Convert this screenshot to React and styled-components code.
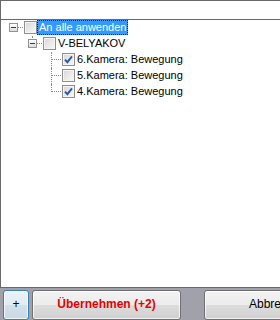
import React from 'react';
import styled, { createGlobalStyle } from 'styled-components';

const Global = createGlobalStyle`
  body {
    margin: 0;
    overflow: hidden;
    background: #ffffff;
    font-family: "Liberation Sans", Arial, sans-serif;
  }
`;

const Frame = styled.div`
  width: 280px;
  height: 320px;
  display: flex;
  flex-direction: column;
  background-color: #a1a1ac;
  overflow: hidden;
`;

const TopStrip = styled.div`
  height: 18px;
  background-color: white;
  border-top: 1px solid #6a6a6a;
  border-left: 1px solid #6a6a6a;
`;

const TreePanel = styled.div`
  box-sizing: border-box;
  height: 271px;
  padding: 0 0 0 3px;
  background-color: white;
  border-top: 1px solid #6a6a6a;
  border-left: 1px solid #6a6a6a;
  border-bottom: 1px solid #6a6a6a;
`;

const Row = styled.div`
  display: flex;
  align-items: center;
  height: 16px;
  box-sizing: border-box;
  padding-bottom: 1px;
`;

const Guide = styled.span`
  position: relative;
  flex: none;
  width: 19px;
  height: 16px;
  align-self: flex-start;

  &::before {
    content: '';
    display: ${(props) => (props.up || props.down ? 'block' : 'none')};
    position: absolute;
    left: 9px;
    top: ${(props) => (props.up ? '0' : '8px')};
    bottom: ${(props) => (props.down ? '0' : '8px')};
    border-left: 1px dotted #8c8c8c;
  }

  &::after {
    content: '';
    display: ${(props) => (props.branch ? 'block' : 'none')};
    position: absolute;
    top: 7px;
    left: ${(props) => (props.expander ? '14px' : '10px')};
    right: 0;
    border-top: 1px dotted #8c8c8c;
  }
`;

const Expander = styled.span`
  position: absolute;
  left: 5px;
  top: 3px;
  width: 7px;
  height: 7px;
  border: 1px solid #939393;
  background: linear-gradient(#ffffff, #dcdcdc);
  z-index: 1;

  &::after {
    content: '';
    position: absolute;
    left: 1px;
    top: 3px;
    width: 5px;
    height: 1px;
    background-color: #3a3a3a;
  }
`;

const Check = styled.span`
  flex: none;
  box-sizing: border-box;
  width: 13px;
  height: 13px;
  margin-left: 1px;
  border: 1px solid #8f8f8f;
  background: linear-gradient(135deg, #d6d6d6 0%, #ececec 60%, #f8f8f8 100%);
  box-shadow: inset 0 0 0 1px #f4f4f4;
  display: flex;
  align-items: center;
  justify-content: center;
`;

const Label = styled.span`
  flex: none;
  height: 13px;
  line-height: 13px;
  padding: 0 1px;
  font-size: 11px;
  white-space: nowrap;
  color: ${(props) => (props.selected ? 'white' : '#000000')};
  background-color: ${(props) => (props.selected ? '#3399ff' : 'transparent')};
  border: 1px dotted ${(props) => (props.selected ? '#202020' : 'transparent')};
`;

const ButtonBar = styled.div`
  flex: 1;
  display: flex;
  align-items: flex-start;
  padding: 2px 0 0 3px;
`;

const Button = styled.button`
  flex: none;
  box-sizing: border-box;
  height: 30px;
  width: ${(props) => props.width}px;
  margin-right: ${(props) => props.gap || 0}px;
  padding: 0 0 2px;
  border: 1px solid ${(props) => (props.focused ? '#3c7fb1' : '#707070')};
  border-radius: 3px;
  background: ${(props) =>
    props.focused
      ? 'linear-gradient(#eaf3f9 0%, #e0ebf3 50%, #d2e0ea 51%, #c9d9e5 100%)'
      : 'linear-gradient(#f3f3f3 0%, #ebebeb 50%, #dddddd 51%, #d0d0d0 100%)'};
  box-shadow: inset 0 0 0 1px rgba(255, 255, 255, 0.7);
  font-family: "Liberation Sans", Arial, sans-serif;
  font-size: 12px;
  font-weight: ${(props) => (props.primary ? 'bold' : 'normal')};
  color: ${(props) => (props.primary ? '#e30000' : '#000000')};
  white-space: nowrap;
  overflow: hidden;
`;

const CheckMark = () => (
  <svg width="9" height="9" viewBox="0 0 9 9">
    <path d="M1 4.6 L3.4 7.2 L8 1.4" fill="none" stroke="#2f56a6" strokeWidth="1.9" />
  </svg>
);

const nodes = [
  { label: 'An alle anwenden', selected: true, guides: [{ expander: true, branch: true }] },
  { label: 'V-BELYAKOV', guides: [{}, { expander: true, branch: true, up: true }] },
  { label: '6.Kamera: Bewegung', checked: true, guides: [{}, {}, { up: true, down: true, branch: true }] },
  { label: '5.Kamera: Bewegung', guides: [{}, {}, { up: true, down: true, branch: true }] },
  { label: '4.Kamera: Bewegung', checked: true, guides: [{}, {}, { up: true, branch: true }] },
];

const TreeRow = ({ node }) => (
  <Row>
    {node.guides.map((g, i) => (
      <Guide key={i} up={g.up} down={g.down} branch={g.branch} expander={g.expander}>
        {g.expander && <Expander />}
      </Guide>
    ))}
    <Check>{node.checked && <CheckMark />}</Check>
    <Label selected={node.selected}>{node.label}</Label>
  </Row>
);

const App = () => {
  return (
    <Frame>
      <Global />
      <TopStrip />
      <TreePanel>
        {nodes.map((node) => (
          <TreeRow key={node.label} node={node} />
        ))}
      </TreePanel>
      <ButtonBar>
        <Button width={26} gap={3} focused>+</Button>
        <Button width={149} gap={23} primary>Übernehmen (+2)</Button>
        <Button width={148}>Abbrechen</Button>
      </ButtonBar>
    </Frame>
  );
};

export default App;
